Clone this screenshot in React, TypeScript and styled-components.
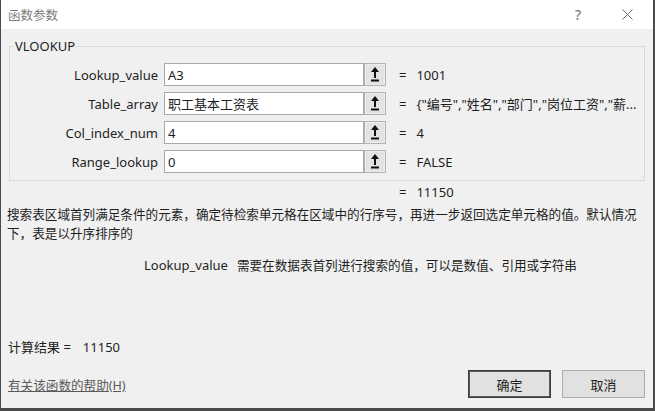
import React from 'react';
import styled, { createGlobalStyle } from 'styled-components';

const GlobalStyle = createGlobalStyle`
  html, body {
    margin: 0;
    padding: 0;
    background: #f0f0f0;
  }
  body {
    font-family: "Noto Sans", "Noto Sans CJK SC", sans-serif;
  }
`;

const Window = styled.div`
  box-sizing: border-box;
  width: 655px;
  height: 411px;
  display: flex;
  flex-direction: column;
  background: #f0f0f0;
  border-left: 1px solid #4a4a4a;
  border-right: 2px solid #4a4a4a;
  border-bottom: 3px solid #4a4a4a;
  color: #1e1e1e;
  font-size: 13px;
`;

const TitleBar = styled.div`
  flex: none;
  height: 29px;
  display: flex;
  align-items: center;
  gap: 3px;
  padding: 0 3px 0 7px;
  background: #fff;
`;

const Title = styled.span`
  flex: 1;
  color: #7a7a7a;
  font-size: 12.5px;
`;

const TitleButton = styled.span`
  width: 46px;
  height: 29px;
  display: flex;
  align-items: center;
  justify-content: center;
  color: #6a6a6a;
  font-size: 14px;
`;

const Body = styled.div`
  flex: 1;
  display: flex;
  flex-direction: column;
  padding: 0 8px 10px 7px;
`;

const Group = styled.fieldset`
  margin: 9px 0 0 1px;
  padding: 9px 0 7px 0;
  border: 1px solid #d9d9d9;
  min-width: 0;
`;

const Legend = styled.legend`
  margin-left: 4px;
  padding: 0 1px;
  line-height: 16px;
  font-size: 13px;
`;

const ArgGrid = styled.div`
  display: grid;
  grid-template-columns: 154px 200px 22px 1fr;
  grid-auto-rows: 23px;
  row-gap: 6px;
`;

const ArgLabel = styled.div`
  display: flex;
  align-items: center;
  justify-content: flex-end;
  padding-right: 6px;
  white-space: nowrap;
`;

const ArgInput = styled.div`
  box-sizing: border-box;
  display: flex;
  align-items: center;
  padding-left: 3px;
  background: #fff;
  border: 1px solid #a9a9a9;
  white-space: nowrap;
`;

const RefButton = styled.div`
  box-sizing: border-box;
  display: flex;
  align-items: center;
  justify-content: center;
  background: #e3e3e3;
  border: 1px solid #b3b3b3;
  box-shadow: inset 0 0 0 1px #ededed;
`;

const ArgValue = styled.div`
  display: flex;
  align-items: center;
  padding-left: 13px;
  white-space: nowrap;
  overflow: hidden;
`;

const Eq = styled.span`
  margin-right: 10px;
`;

const ResultLine = styled.div`
  margin-top: 2px;
  padding-left: 391px;
  line-height: 18px;
`;

const Description = styled.div`
  margin: 4px 0 0 -1px;
  line-height: 19px;
  font-size: 12.6px;
`;

const ParamHelp = styled.div`
  margin-top: 13px;
  padding-left: 136px;
  line-height: 18px;
  font-size: 12.6px;
  white-space: nowrap;
`;

const ParamName = styled.span`
  margin-right: 9px;
  font-size: 13px;
`;

const Spacer = styled.div`
  flex: 1;
`;

const CalcResult = styled.div`
  margin-bottom: 14px;
  line-height: 18px;
`;

const CalcValue = styled.span`
  margin-left: 12px;
`;

const Footer = styled.div`
  display: flex;
  align-items: center;
  gap: 11px;
  height: 28px;
`;

const HelpLink = styled.a`
  flex: 1;
  color: #5a5a5a;
  font-size: 12.6px;
  text-decoration: underline;
  cursor: pointer;
`;

const DialogButton = styled.button<{ $primary?: boolean }>`
  box-sizing: border-box;
  width: 83px;
  height: 28px;
  padding: 0;
  font-family: inherit;
  font-size: 13px;
  color: #1e1e1e;
  background: #e1e1e1;
  border: 1px solid ${(p) => (p.$primary ? '#3c3c3c' : '#adadad')};
  box-shadow: ${(p) => (p.$primary ? 'inset 0 0 0 1px #5a5a5a' : 'none')};
`;

const RefIcon = () => (
  <svg width="8" height="15" viewBox="0 0 8 15">
    <polygon points="4,0 8,5 5,5 5,11 3,11 3,5 0,5" fill="#111" />
    <rect x="0" y="12.5" width="8" height="2" fill="#111" />
  </svg>
);

const CloseIcon = () => (
  <svg width="11" height="11" viewBox="0 0 11 11">
    <path d="M0.5 0.5 L10.5 10.5 M10.5 0.5 L0.5 10.5" stroke="#6a6a6a" strokeWidth="1" fill="none" />
  </svg>
);

const args = [
  { name: 'Lookup_value', input: 'A3', value: '1001' },
  { name: 'Table_array', input: '职工基本工资表', value: '{"编号","姓名","部门","岗位工资","薪...' },
  { name: 'Col_index_num', input: '4', value: '4' },
  { name: 'Range_lookup', input: '0', value: 'FALSE' },
];

export default function App() {
  return (
    <>
      <GlobalStyle />
      <Window>
        <TitleBar>
          <Title>函数参数</Title>
          <TitleButton>?</TitleButton>
          <TitleButton>
            <CloseIcon />
          </TitleButton>
        </TitleBar>
        <Body>
          <Group>
            <Legend>VLOOKUP</Legend>
            <ArgGrid>
              {args.map((a) => (
                <React.Fragment key={a.name}>
                  <ArgLabel>{a.name}</ArgLabel>
                  <ArgInput>{a.input}</ArgInput>
                  <RefButton>
                    <RefIcon />
                  </RefButton>
                  <ArgValue>
                    <Eq>=</Eq>
                    {a.value}
                  </ArgValue>
                </React.Fragment>
              ))}
            </ArgGrid>
          </Group>
          <ResultLine>
            <Eq>=</Eq>11150
          </ResultLine>
          <Description>
            搜索表区域首列满足条件的元素，确定待检索单元格在区域中的行序号，再进一步返回选定单元格的值。默认情况下，表是以升序排序的
          </Description>
          <ParamHelp>
            <ParamName>Lookup_value</ParamName>
            需要在数据表首列进行搜索的值，可以是数值、引用或字符串
          </ParamHelp>
          <Spacer />
          <CalcResult>
            计算结果 =<CalcValue>11150</CalcValue>
          </CalcResult>
          <Footer>
            <HelpLink>有关该函数的帮助(H)</HelpLink>
            <DialogButton $primary>确定</DialogButton>
            <DialogButton>取消</DialogButton>
          </Footer>
        </Body>
      </Window>
    </>
  );
}
